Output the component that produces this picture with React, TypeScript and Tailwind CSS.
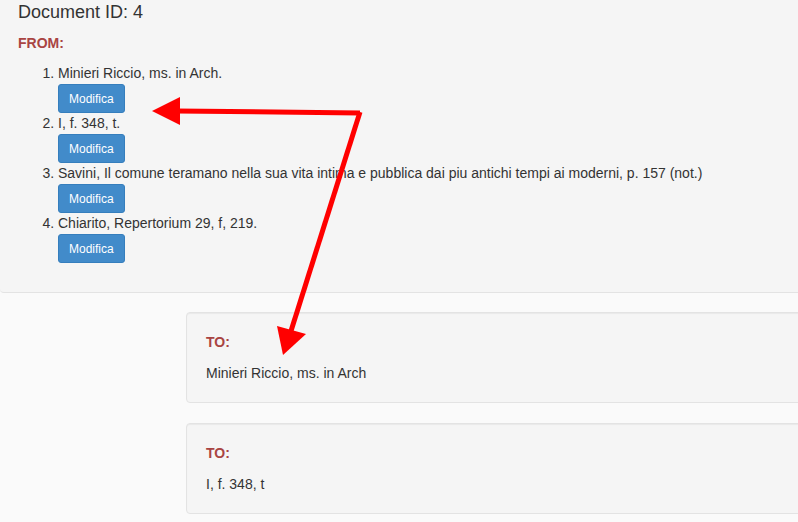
const fromItems = [
  "Minieri Riccio, ms. in Arch.",
  "I, f. 348, t.",
  "Savini, Il comune teramano nella sua vita intima e pubblica dai piu antichi tempi ai moderni, p. 157 (not.)",
  "Chiarito, Repertorium 29, f, 219.",
]

const toItems = ["Minieri Riccio, ms. in Arch", "I, f. 348, t"]

function ToCard({ text }: { text: string }) {
  return (
    <div className="w-[700px] ml-[186px] mb-[20px] bg-[#f5f5f5] border border-[#e3e3e3] rounded-[4px] px-[19px] py-[19px] shadow-[inset_0_1px_1px_rgba(0,0,0,0.05)]">
      <div className="text-[14px] leading-[20px] font-bold text-[#a94442] mb-[11px]">TO:</div>
      <div className="text-[14px] leading-[20px] text-[#333]">{text}</div>
    </div>
  )
}

export default function App() {
  return (
    <div
      className="relative w-[798px] h-[522px] overflow-hidden bg-[#fafafa]"
      style={{ fontFamily: '"Liberation Sans", Arial, sans-serif' }}
    >
      {/* FROM well */}
      <div className="w-[1000px] bg-[#f5f5f5] border-b border-[#e3e3e3] rounded-b-[4px] pl-[18px] pt-[2px] pb-[29px]">
        <h4 className="text-[18px] leading-[20px] text-[#333] mb-[11px]">Document ID: 4</h4>
        <div className="text-[14px] leading-[20px] font-bold text-[#a94442] mb-[10px]">FROM:</div>
        <ol className="list-decimal pl-[40px] text-[14px] leading-[20px] text-[#333]">
          {fromItems.map((item) => (
            <li key={item} className="h-[50px]">
              <div>{item}</div>
              <button className="mt-px h-[29px] px-[10px] bg-[#428bca] border border-[#357ebd] rounded-[3px] text-white text-[12px] leading-[18px]">
                Modifica
              </button>
            </li>
          ))}
        </ol>
      </div>

      {/* TO cards */}
      <div className="pt-[19px]">
        {toItems.map((t) => (
          <ToCard key={t} text={t} />
        ))}
      </div>

      {/* annotation arrows */}
      <svg className="absolute inset-0 pointer-events-none" width="798" height="522">
        <line x1="360" y1="113" x2="176" y2="111" stroke="#ff0000" strokeWidth="5" />
        <polygon points="152,111 180,97 180,125" fill="#ff0000" />
        <line x1="360" y1="112" x2="291" y2="331" stroke="#ff0000" strokeWidth="5" />
        <polygon points="283,355 277,326 306,334" fill="#ff0000" />
      </svg>
    </div>
  )
}
